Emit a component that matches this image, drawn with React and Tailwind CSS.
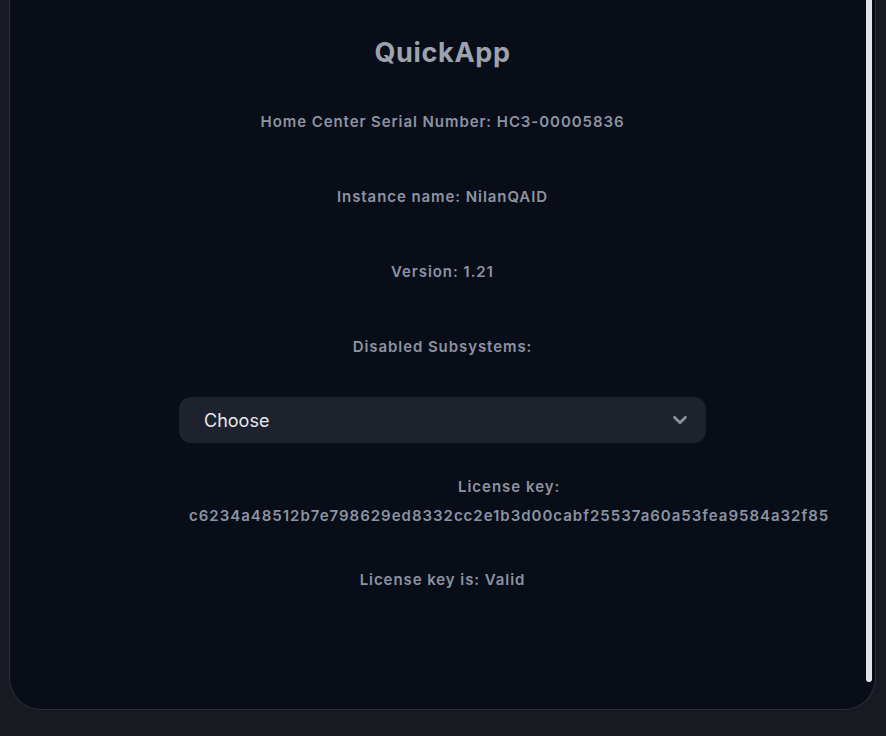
import React from "react";

const rows = [
  "Home Center Serial Number: HC3-00005836",
  "Instance name: NilanQAID",
  "Version: 1.21",
  "Disabled Subsystems:",
];

export default function App() {
  return (
    <div className="h-[736px] w-full overflow-hidden bg-[#171a21] font-['Inter',sans-serif]">
      <div className="relative ml-[9px] mr-[10px] h-[710px] rounded-b-[32px] border-x border-b border-[#2b2f38] bg-[#080d17]">
        <div className="absolute right-[3px] top-0 h-[682px] w-[6px] rounded-b-full bg-[#e4e4e8]" />
        <div className="flex flex-col items-center pt-[36px]">
          <h1 className="text-[27px] font-bold leading-[34px] tracking-wide text-[#9da2af]">
            QuickApp
          </h1>
          <div className="mt-[42px] flex flex-col items-center gap-[55px]">
            {rows.map((r) => (
              <p
                key={r}
                className="text-[15px] font-semibold leading-[20px] tracking-[0.062em] text-[#8d93a2]"
              >
                {r}
              </p>
            ))}
          </div>
          <div className="mt-[40px] w-[527px]">
            <button className="flex h-[46px] w-full items-center justify-between rounded-xl bg-[#1d222c] pl-[25px] pr-[15px]">
              <span className="text-[18px] text-[#e6e8ec]">Choose</span>
              <svg
                viewBox="0 0 24 24"
                className="h-[22px] w-[22px] text-[#8b909c]"
                fill="none"
                stroke="currentColor"
                strokeWidth={3}
                strokeLinecap="round"
                strokeLinejoin="round"
              >
                <path d="M6 9l6 6 6-6" />
              </svg>
            </button>
            <div className="mt-[34px] w-max pl-[10px] text-center text-[15px] font-semibold leading-[20px] tracking-[0.066em] text-[#8d93a2]">
              <p>License key:</p>
              <p className="mt-[9px]">
                c6234a48512b7e798629ed8332cc2e1b3d00cabf25537a60a53fea9584a32f85
              </p>
            </div>
          </div>
          <p className="mt-[44px] text-[15px] font-semibold leading-[20px] tracking-[0.062em] text-[#8d93a2]">
            License key is: Valid
          </p>
        </div>
      </div>
    </div>
  );
}
